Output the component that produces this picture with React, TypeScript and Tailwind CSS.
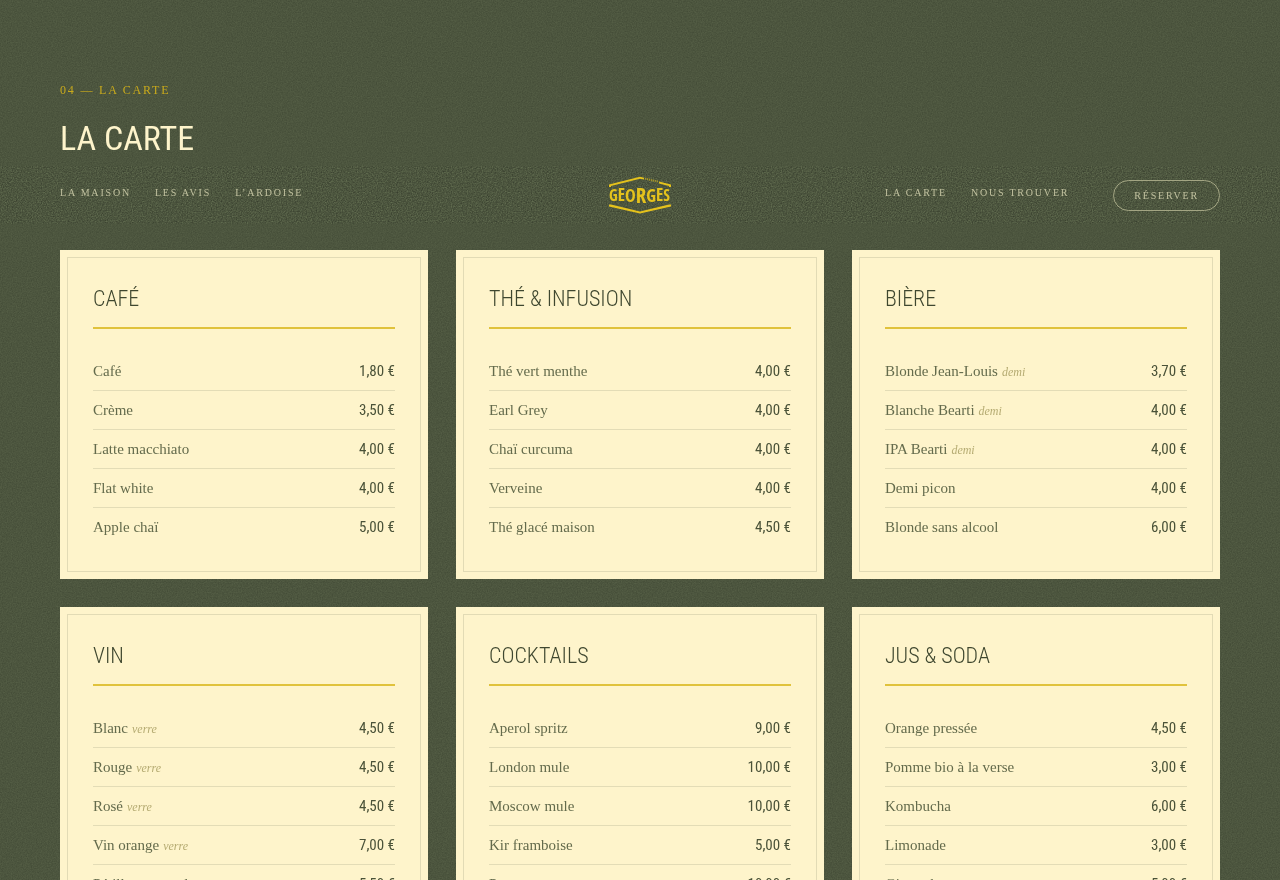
import clsx from 'clsx';

type Item = { name: string; note?: string; price: string };
type Category = { title: string; items: Item[] };

const categories: Category[] = [
  {
    title: 'Café',
    items: [
      { name: 'Café', price: '1,80 €' },
      { name: 'Crème', price: '3,50 €' },
      { name: 'Latte macchiato', price: '4,00 €' },
      { name: 'Flat white', price: '4,00 €' },
      { name: 'Apple chaï', price: '5,00 €' },
    ],
  },
  {
    title: 'Thé & infusion',
    items: [
      { name: 'Thé vert menthe', price: '4,00 €' },
      { name: 'Earl Grey', price: '4,00 €' },
      { name: 'Chaï curcuma', price: '4,00 €' },
      { name: 'Verveine', price: '4,00 €' },
      { name: 'Thé glacé maison', price: '4,50 €' },
    ],
  },
  {
    title: 'Bière',
    items: [
      { name: 'Blonde Jean-Louis', note: 'demi', price: '3,70 €' },
      { name: 'Blanche Bearti', note: 'demi', price: '4,00 €' },
      { name: 'IPA Bearti', note: 'demi', price: '4,00 €' },
      { name: 'Demi picon', price: '4,00 €' },
      { name: 'Blonde sans alcool', price: '6,00 €' },
    ],
  },
  {
    title: 'Vin',
    items: [
      { name: 'Blanc', note: 'verre', price: '4,50 €' },
      { name: 'Rouge', note: 'verre', price: '4,50 €' },
      { name: 'Rosé', note: 'verre', price: '4,50 €' },
      { name: 'Vin orange', note: 'verre', price: '7,00 €' },
      { name: 'Pétillant naturel', price: '5,50 €' },
    ],
  },
  {
    title: 'Cocktails',
    items: [
      { name: 'Aperol spritz', price: '9,00 €' },
      { name: 'London mule', price: '10,00 €' },
      { name: 'Moscow mule', price: '10,00 €' },
      { name: 'Kir framboise', price: '5,00 €' },
      { name: 'Prosecco', price: '10,00 €' },
    ],
  },
  {
    title: 'Jus & soda',
    items: [
      { name: 'Orange pressée', price: '4,50 €' },
      { name: 'Pomme bio à la verse', price: '3,00 €' },
      { name: 'Kombucha', price: '6,00 €' },
      { name: 'Limonade', price: '3,00 €' },
      { name: 'Ginger beer', price: '5,00 €' },
    ],
  },
];

const leftLinks = [
  { label: 'La maison', href: '#maison' },
  { label: 'Les avis', href: '#avis' },
  { label: 'L’ardoise', href: '#ardoise' },
];
const rightLinks = [
  { label: 'La carte', href: '#carte' },
  { label: 'Nous trouver', href: '#trouver' },
];

// paper grain laid behind the content: opaque grey noise centred on mid grey
function Grain({ id, className }: { id: string; className: string }) {
  return (
    <svg aria-hidden="true" className={clsx('pointer-events-none absolute inset-0 h-full w-full mix-blend-overlay', className)}>
      <filter id={id} x="0" y="0" width="100%" height="100%" colorInterpolationFilters="sRGB">
        <feTurbulence type="fractalNoise" baseFrequency="0.8" numOctaves="3" stitchTiles="stitch" />
        <feColorMatrix values="1.6 0 0 0 -.3  1.6 0 0 0 -.3  1.6 0 0 0 -.3  0 0 0 0 1" />
      </filter>
      <rect width="100%" height="100%" filter={`url(#${id})`} />
    </svg>
  );
}

function Logo() {
  return (
    <svg viewBox="0 0 64 38" className="h-[38px] w-16" role="img" aria-label="Georges" fill="#e5c21c">
      <path d="M1 8.6 32 .8 36 1.8V3.4L32 2.7 3 10v1H1z" />
      <path d="M51 5.5 63 8.6V11h-2v-1L51 7.4z" />
      <path d="M37 2.6 50 5.6" stroke="#e5c21c" strokeWidth="2" strokeDasharray="1.2 .8" opacity=".6" />
      <path d="M1 28.5h2l29 7 29-7h2v2L32 37.6 1 30.5z" />
      <text className="font-['Open_Sans_Condensed','Roboto_Condensed',sans-serif] font-bold">
        <tspan x="1" y="25" fontSize="16">G</tspan>
        <tspan y="25" fontSize="17">E</tspan>
        <tspan y="26" fontSize="18">O</tspan>
        <tspan y="27" fontSize="21">R</tspan>
        <tspan y="26" fontSize="18">G</tspan>
        <tspan y="25" fontSize="17">E</tspan>
        <tspan y="25" fontSize="16">S</tspan>
      </text>
    </svg>
  );
}

function NavLinks({ links }: { links: { label: string; href: string }[] }) {
  return (
    <ul className="flex gap-6 pb-2">
      {links.map(l => (
        <li key={l.href}>
          <a href={l.href} className="text-[10px] leading-4 uppercase tracking-[0.18em] whitespace-nowrap hover:text-[#e5c21c]">{l.label}</a>
        </li>
      ))}
    </ul>
  );
}

function Card({ category }: { category: Category }) {
  return (
    <article className="bg-[#fef4cb] p-[7px]">
      <div className="h-full border border-[#e2dbb5] p-[25px]">
        <h3 className="border-b-2 border-[#e0c23c] pb-3 font-['Roboto_Condensed','Roboto',sans-serif] text-[22px] leading-8 font-light uppercase text-[#3f472f]">
          {category.title}
        </h3>
        <ul className="mt-[23px]">
          {category.items.map(item => (
            <li key={item.name} className="flex h-[39px] items-center justify-between border-b border-[#e3dcb6] last:h-[38px] last:border-b-0">
              <span className="text-[15px] text-[#646b4c]">
                {item.name}
                {item.note && <em className="ml-1 text-xs text-[#b5ab72]">{item.note}</em>}
              </span>
              <span className="font-['Roboto_Condensed','Roboto',sans-serif] text-[15px] text-[#4a5238]">{item.price}</span>
            </li>
          ))}
        </ul>
      </div>
    </article>
  );
}

export default function App() {
  return (
    <div className="relative min-h-screen bg-[#4c553e] font-['Liberation_Serif',serif]">
      <Grain id="grain-page" className="opacity-10" />
      <section id="carte" className="relative pt-20 pb-20">
        <header className="px-[60px]">
          <p className="text-xs leading-5 uppercase tracking-[0.15em] text-[#c9aa1c]">04 — La carte</p>
          <h2 className="mt-[18px] font-['Roboto_Condensed','Roboto',sans-serif] text-[34px] leading-10 uppercase text-[#fef4cb]">La carte</h2>
        </header>

        <nav aria-label="Navigation principale" className="relative mt-2 h-[58px]">
          <Grain id="grain-nav" className="opacity-20" />
          <div className="relative grid h-full grid-cols-[1fr_auto_1fr] items-center px-[60px] text-[#c1c19f]">
            <NavLinks links={leftLinks} />
            <a href="#top"><Logo /></a>
            <div className="flex items-center justify-end gap-11">
              <NavLinks links={rightLinks} />
              <button type="button" className="h-[31px] cursor-pointer rounded-full border border-[#a3a583] px-5 text-[10px] uppercase tracking-[0.18em]">
                Réserver
              </button>
            </div>
          </div>
        </nav>

        <div className="mt-[26px] grid grid-cols-3 gap-7 px-[60px]">
          {categories.map(c => <Card key={c.title} category={c} />)}
        </div>
      </section>
    </div>
  );
}
